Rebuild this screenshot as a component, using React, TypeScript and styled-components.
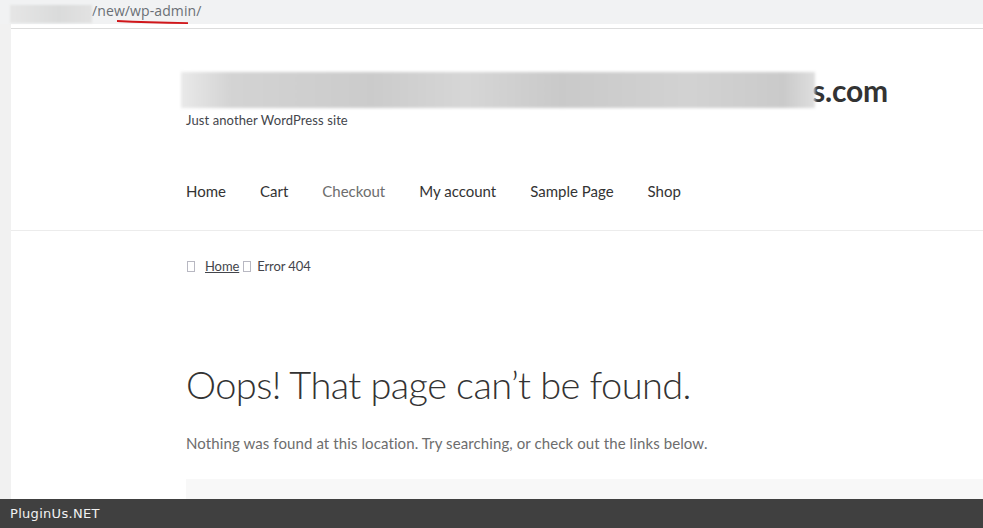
import React from 'react'
import styled, { createGlobalStyle } from 'styled-components'

const GlobalStyle = createGlobalStyle`
  html, body {
    margin: 0;
    padding: 0;
    background: #f1f1f1;
    height: 100%;
    overflow: hidden;
  }
  #root {
    height: 100%;
  }
`;

const Screen = styled.div`
  height: 528px;
  display: flex;
  flex-direction: column;
  font-family: Lato, "Open Sans", sans-serif;
`;

const AddressBar = styled.div`
  height: 24px;
  flex: none;
  background: #f1f2f3;
  display: flex;
  align-items: center;
  position: relative;
`;

const BlurredHost = styled.div`
  width: 82px;
  height: 18px;
  margin-left: 10px;
  margin-top: 4px;
  background: linear-gradient(90deg, #e6e6e6, #dadbdb 60%, #e2e2e2);
  filter: blur(1px);
`;

const UrlPath = styled.span`
  font-family: "Open Sans", "Noto Sans", sans-serif;
  font-size: 14px;
  color: #6a6f75;
  margin-top: -4px;
  letter-spacing: 0.1px;
`;

const Underline = styled.svg`
  position: absolute;
  left: 116px;
  top: 19px;
`;

const Body = styled.div`
  flex: 1;
  display: flex;
  min-height: 0;
`;

const Gutter = styled.div`
  width: 11px;
  flex: none;
  background: #f1f1f1;
`;

const Page = styled.div`
  flex: 1;
  background: #fff;
  padding-top: 4px;
  display: flex;
  flex-direction: column;
  min-height: 0;
  overflow: hidden;
`;

const Header = styled.header`
  border-top: 1px solid #dcdcdc;
  border-bottom: 1px solid #ececec;
  padding: 43px 0 0 175px;
  height: 158px;
  flex: none;
`;

const Branding = styled.div`
  display: flex;
  align-items: center;
  height: 36px;
`;

const TitleBlur = styled.div`
  width: 634px;
  height: 36px;
  margin-left: -5px;
  margin-right: -3px;
  position: relative;
  z-index: 1;
  background: linear-gradient(90deg, #e9e9e9 0%, #d3d3d3 8%, #cbcbcb 30%, #d6d6d6 45%, #c9c9c9 60%, #d2d2d2 80%, #cacaca 95%, #dedede 100%);
  filter: blur(1.5px);
`;

const TitleTail = styled.span`
  font-family: Lato, "Open Sans", sans-serif;
  font-weight: 700;
  font-size: 30px;
  color: #333;
  letter-spacing: -0.2px;
`;

const Tagline = styled.p`
  margin: 4px 0 0;
  font-size: 13px;
  color: #43454b;
  letter-spacing: 0.1px;
`;

const Nav = styled.nav`
  display: flex;
  margin-top: 54px;
  gap: 34px;
`;

const NavLink = styled.a<{ $muted?: boolean }>`
  font-size: 15px;
  color: ${p => (p.$muted ? '#6d6d6d' : '#333')};
  text-decoration: none;
`;

const Content = styled.main`
  padding: 26px 0 0 175px;
  flex: 1;
  display: flex;
  flex-direction: column;
`;

const Breadcrumb = styled.div`
  display: flex;
  align-items: center;
  font-size: 13px;
  color: #43454b;
  height: 18px;
  letter-spacing: -0.1px;
`;

const GlyphBox = styled.span<{ $gap: number }>`
  display: inline-block;
  width: 6px;
  height: 9px;
  border: 1px solid #9a9aa8;
  margin: 0 ${p => p.$gap}px 0 1px;
  opacity: 0.7;
`;

const CrumbLink = styled.a`
  color: #43454b;
  text-decoration: underline;
  margin-right: 3px;
`;

const Title = styled.h1`
  margin: 86px 0 0;
  font-weight: 300;
  font-size: 38px;
  color: #333;
  letter-spacing: -0.6px;
  line-height: 46px;
`;

const Lead = styled.p`
  margin: 27px 0 0;
  font-size: 15px;
  color: #6d6d6d;
  letter-spacing: 0.1px;
`;

const SearchPanel = styled.div`
  margin-top: 27px;
  background: #f8f8f8;
  flex: 1;
`;

const Footer = styled.div`
  height: 29px;
  flex: none;
  background: #404040;
  display: flex;
  align-items: center;
  padding-left: 10px;
  font-family: "DejaVu Sans", sans-serif;
  font-size: 13px;
  color: #f2f2f2;
  letter-spacing: 0.3px;
`;

export default function App() {
  const items = ['Home', 'Cart', 'Checkout', 'My account', 'Sample Page', 'Shop'];
  return (
    <>
      <GlobalStyle />
      <Screen>
        <AddressBar>
          <BlurredHost />
          <UrlPath>/new/wp-admin/</UrlPath>
          <Underline width="74" height="6" viewBox="0 0 74 6">
            <path d="M1 2 Q 30 3.5 72 4.2" stroke="#d0161a" strokeWidth="1.8" fill="none" />
          </Underline>
        </AddressBar>
        <Body>
          <Gutter />
          <Page>
            <Header>
              <Branding>
                <TitleBlur />
                <TitleTail>s.com</TitleTail>
              </Branding>
              <Tagline>Just another WordPress site</Tagline>
              <Nav>
                {items.map(i => (
                  <NavLink key={i} href="#" $muted={i === 'Checkout'}>
                    {i}
                  </NavLink>
                ))}
              </Nav>
            </Header>
            <Content>
              <Breadcrumb>
                <GlyphBox $gap={10} />
                <CrumbLink href="#">Home</CrumbLink>
                <GlyphBox $gap={6} />
                <span>Error 404</span>
              </Breadcrumb>
              <Title>Oops! That page can’t be found.</Title>
              <Lead>Nothing was found at this location. Try searching, or check out the links below.</Lead>
              <SearchPanel />
            </Content>
          </Page>
        </Body>
        <Footer>PluginUs.NET</Footer>
      </Screen>
    </>
  );
}
